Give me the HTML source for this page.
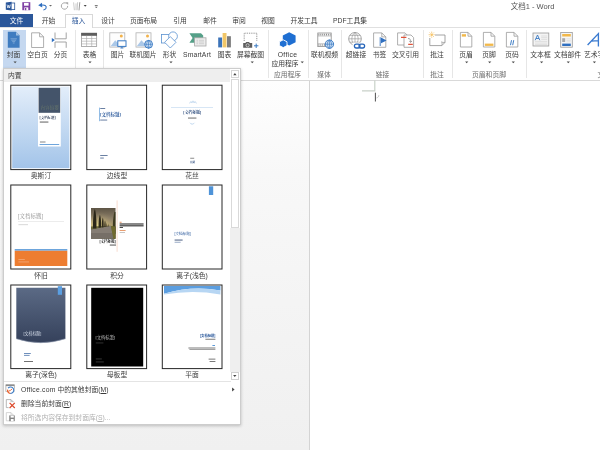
<!DOCTYPE html>
<html lang="zh-CN"><head><meta charset="utf-8"><title>文档1 - Word</title>
<style>
html,body{margin:0;padding:0;}
body{width:600px;height:450px;overflow:hidden;background:#fff;position:relative;font-family:"Liberation Sans","Noto Sans CJK SC",sans-serif;font-size:6.8px;color:#3a3a3a;line-height:9px;}
#app{position:absolute;left:0;top:0;width:600px;height:450px;overflow:hidden;will-change:transform;filter:blur(.35px);}
.a{position:absolute;}
.t{position:absolute;white-space:nowrap;transform:translateX(-50%);text-align:center;}
.l{position:absolute;white-space:nowrap;}
.sep{position:absolute;top:30px;height:48px;width:1px;background:#e6e6e6;}
.arr{position:absolute;width:0;height:0;border-left:1.5px solid transparent;border-right:1.5px solid transparent;border-top:1.9px solid #555;}
.thumb{position:absolute;width:60px;height:84px;border:1px solid #222;background:#fff;overflow:hidden;box-sizing:content-box;}
.gl{color:#6c6c6c;}
</style></head><body><div id="app">

<!-- workspace background -->
<div class="a" id="ws" style="left:0;top:81px;width:309px;height:369px;background:linear-gradient(#fefefe,#f8f8f8 25%,#f4f4f4 60%,#f0f0f0);"></div>
<div class="a" style="left:309px;top:81px;width:1px;height:369px;background:#d4d4d4;"></div>
<div class="a" style="left:0;top:80px;width:600px;height:1px;background:#d9d9d9;"></div>

<!-- title bar -->
<div class="t" style="left:532.5px;top:2px;font-size:7.5px;color:#555;">文档1 - Word</div>

<!-- tabs -->
<div class="a" style="left:0;top:14.1px;width:33px;height:13.2px;background:#2b579a;"></div>
<div class="t" style="left:16.5px;top:16.1px;color:#fff;">文件</div>
<div class="t" style="left:48.5px;top:16.1px;">开始</div>
<div class="a" style="left:64.5px;top:14px;width:28.5px;height:13.6px;border:1px solid #d8d8d8;border-bottom:none;background:#fff;box-sizing:border-box;"></div>
<div class="t" style="left:78.5px;top:16.1px;color:#2b579a;">插入</div>
<div class="t" style="left:108px;top:16.1px;">设计</div>
<div class="t" style="left:143.5px;top:16.1px;">页面布局</div>
<div class="t" style="left:180px;top:16.1px;">引用</div>
<div class="t" style="left:210px;top:16.1px;">邮件</div>
<div class="t" style="left:239px;top:16.1px;">审阅</div>
<div class="t" style="left:268px;top:16.1px;">视图</div>
<div class="t" style="left:304px;top:16.1px;">开发工具</div>
<div class="t" style="left:350px;top:16.1px;">PDF工具集</div>
<div class="a" style="left:0;top:27px;width:64.5px;height:1px;background:#e0e0e0;"></div>
<div class="a" style="left:93px;top:27px;width:507px;height:1px;background:#e0e0e0;"></div>

<!-- ribbon -->
<div class="a" style="left:2.6px;top:29.8px;width:23px;height:39px;background:#c5d8f0;"></div>
<div class="t" style="left:13.5px;top:50px;">封面</div>
<div class="t" style="left:37.5px;top:50px;">空白页</div>
<div class="t" style="left:60.5px;top:50px;">分页</div>
<div class="sep" style="left:75px;"></div>
<div class="t" style="left:89.5px;top:50px;">表格</div>
<div class="sep" style="left:103px;"></div>
<div class="t" style="left:117.5px;top:50px;">图片</div>
<div class="t" style="left:143px;top:50px;">联机图片</div>
<div class="t" style="left:169.5px;top:50px;">形状</div>
<div class="t" style="left:197px;top:50px;"><span style="letter-spacing:.15px">SmartArt</span></div>
<div class="t" style="left:224.5px;top:50px;">图表</div>
<div class="t" style="left:250.5px;top:50px;">屏幕截图</div>
<div class="sep" style="left:268px;"></div>
<div class="t" style="left:287.5px;top:50px;"><span style="letter-spacing:.3px">Office</span></div>
<div class="t" style="left:285px;top:58.5px;">应用程序</div>
<div class="t gl" style="left:287.5px;top:70px;">应用程序</div>
<div class="sep" style="left:308px;"></div>
<div class="t" style="left:324.5px;top:50px;">联机视频</div>
<div class="t gl" style="left:324px;top:70px;">媒体</div>
<div class="sep" style="left:341px;"></div>
<div class="t" style="left:356px;top:50px;">超链接</div>
<div class="t" style="left:379.5px;top:50px;">书签</div>
<div class="t" style="left:405.5px;top:50px;">交叉引用</div>
<div class="t gl" style="left:382.5px;top:70px;">链接</div>
<div class="sep" style="left:423px;"></div>
<div class="t" style="left:437px;top:50px;">批注</div>
<div class="t gl" style="left:437px;top:70px;">批注</div>
<div class="sep" style="left:452px;"></div>
<div class="t" style="left:466px;top:50px;">页眉</div>
<div class="t" style="left:489px;top:50px;">页脚</div>
<div class="t" style="left:512px;top:50px;">页码</div>
<div class="t gl" style="left:489px;top:70px;">页眉和页脚</div>
<div class="sep" style="left:526px;"></div>
<div class="t" style="left:540.5px;top:50px;">文本框</div>
<div class="t" style="left:567.5px;top:50px;">文档部件</div>
<div class="l" style="left:584px;top:50px;">艺术字</div>

<div class="l gl" style="left:597.4px;top:70px;">文本</div>
<!-- gallery panel -->
<div class="a" id="gal" style="left:2.6px;top:67.8px;width:238.2px;height:357px;background:#fff;border:1px solid #cdcdcd;box-sizing:border-box;box-shadow:0 1px 3px rgba(0,0,0,.22);"></div>
<div class="a" style="left:3.6px;top:68.8px;width:226px;height:13.6px;background:#eeeeee;"></div>
<div class="l" style="left:8px;top:70.8px;">内置</div>
<!-- scrollbar -->
<div class="a" style="left:229.5px;top:228px;width:10.5px;height:144px;background:#efefef;"></div>
<div class="a" style="left:230.6px;top:70px;width:8.4px;height:8.4px;background:#fff;border:1px solid #d6d6d6;box-sizing:border-box;"></div>
<div class="a" style="left:230.6px;top:78.6px;width:8.4px;height:149.8px;background:#fff;border:1px solid #d9d9d9;box-sizing:border-box;"></div>
<div class="a" style="left:230.6px;top:371.8px;width:8.4px;height:8.2px;background:#fff;border:1px solid #d0d0d0;box-sizing:border-box;"></div>

<div class="t" style="left:41px;top:170.6px;">奥斯汀</div>
<div class="t" style="left:117px;top:170.6px;">边线型</div>
<div class="t" style="left:192px;top:170.6px;">花丝</div>
<div class="t" style="left:41px;top:270.5px;">怀旧</div>
<div class="t" style="left:117px;top:270.5px;">积分</div>
<div class="t" style="left:192px;top:270.5px;">离子(浅色)</div>
<div class="t" style="left:41px;top:369.9px;">离子(深色)</div>
<div class="t" style="left:117px;top:369.9px;">母板型</div>
<div class="t" style="left:192px;top:369.9px;">平面</div>

<div class="a" style="left:4px;top:381px;width:227px;height:1px;background:#e4e4e4;"></div>
<div class="l" style="left:21px;top:385px;"><span style="letter-spacing:.22px">Office.com</span> 中的其他封面(<u>M</u>)</div>
<div class="l" style="left:21px;top:399px;">删除当前封面(<u>R</u>)</div>
<div class="l" style="left:21px;top:412.5px;color:#b0b0b0;">将所选内容保存到封面库(<u>S</u>)...</div>

<svg class="a" style="left:0;top:0;" width="600" height="450" viewBox="0 0 600 450">
<defs>
<linearGradient id="g1" x1="0" y1="0" x2="0" y2="1"><stop offset="0" stop-color="#e3eefa"/><stop offset="1" stop-color="#a3c4e9"/></linearGradient>
<linearGradient id="g7" x1="0" y1="0" x2="0" y2="1"><stop offset="0" stop-color="#5b6a85"/><stop offset="1" stop-color="#35415b"/></linearGradient>
<linearGradient id="gph" x1="0" y1="0" x2="0" y2="1"><stop offset="0" stop-color="#8a7a58"/><stop offset=".45" stop-color="#c9b27c"/><stop offset=".6" stop-color="#7a6a48"/><stop offset="1" stop-color="#77726c"/></linearGradient>
<linearGradient id="gsky" x1="0" y1="0" x2="0" y2="1"><stop offset="0" stop-color="#5e5546"/><stop offset=".35" stop-color="#8d7f68"/><stop offset=".6" stop-color="#b5a273"/><stop offset="1" stop-color="#77726c"/></linearGradient>
<radialGradient id="gglow" cx=".3" cy=".95" r=".75"><stop offset="0" stop-color="#e6d88a" stop-opacity=".95"/><stop offset=".5" stop-color="#cdbb7c" stop-opacity=".5"/><stop offset="1" stop-color="#8d7f68" stop-opacity="0"/></radialGradient>
</defs>
<!-- QAT -->
<g id="qat">
<rect x="9.5" y="3" width="5.2" height="6.6" fill="#fff" stroke="#2b579a" stroke-width=".8"/>
<path d="M5.8 2.6 L11.6 1.8 V10.6 L5.8 9.8Z" fill="#2b579a"/>
<path d="M7 4.6 L7.9 8 L8.7 5.2 L9.5 8 L10.4 4.6" fill="none" stroke="#fff" stroke-width=".7"/>
<rect x="22.3" y="2.2" width="8" height="8" fill="#8040a4"/>
<rect x="24" y="2.9" width="4.6" height="2.8" fill="#fff"/>
<rect x="24.3" y="7.4" width="4" height="2.8" fill="#fff"/>
<rect x="25" y="8" width="1.3" height="2.2" fill="#8040a4"/>
<path d="M41 5.2 C44.5 4.4 47 5.8 46 8.2 C45.4 9.4 44.4 9.8 43.4 10" fill="none" stroke="#2f6fc0" stroke-width="1.1"/>
<path d="M38.2 5.3 L42 2.8 L42.3 7.6Z" fill="#2f6fc0"/>
<path d="M49 4.9 h3 l-1.5 1.7z" fill="#666"/>
<path d="M66.6 3.6 A3.2 3.2 0 1 0 67.7 5.9" fill="none" stroke="#a6a6a6" stroke-width="1"/>
<path d="M65.4 2.2 h2.8 v2.8z" fill="#a6a6a6"/>
<path d="M73.6 2.4 L74.4 10.2 M76 3.4 V10.2 M77.6 2.2 L77.2 10.2" stroke="#c6c6c6" stroke-width=".9" fill="none"/>
<path d="M79.8 2.2 L79 10.4" stroke="#9c9c9c" stroke-width="1" fill="none"/>
<path d="M83.7 4.9 h3 l-1.5 1.8z" fill="#444"/>
<path d="M94.8 5 h2.9 v.7 h-2.9z M94.8 6.7 h2.9 l-1.45 1.4z" fill="#555"/>
</g>
<g id="arrows" fill="#4a4a4a"><path d="M13.50 61.5 h3.2 l-1.6 1.8z"/><path d="M88.40 61.5 h3.2 l-1.6 1.8z"/><path d="M169.40 61.5 h3.2 l-1.6 1.8z"/><path d="M250.65 61.5 h3.2 l-1.6 1.8z"/><path d="M300.65 61.5 h3.2 l-1.6 1.8z"/><path d="M465.10 61.5 h3.2 l-1.6 1.8z"/><path d="M488.10 61.5 h3.2 l-1.6 1.8z"/><path d="M511.70 61.5 h3.2 l-1.6 1.8z"/><path d="M540.00 61.5 h3.2 l-1.6 1.8z"/><path d="M566.70 61.5 h3.2 l-1.6 1.8z"/><path d="M592.80 61.5 h3.2 l-1.6 1.8z"/></g>
<!-- ribbon icons -->
<g id="rib" fill="none">
<!-- cover -->
<path d="M7.8 31.8 H16 L19.6 35.4 V47.8 H7.8Z" fill="#3f7cc0"/>
<path d="M16 31.8 V35.4 H19.6Z" fill="#9dbde0"/>
<path d="M10.5 38.8 h6.4 M11.3 40.2 h4.8 M12.2 41.6 h3 M12.8 43 h1.8" stroke="#8fb4de" stroke-width=".7"/>
<!-- blank page -->
<path d="M31.6 32.8 H39.6 L43.6 36.8 V47.5 H31.6Z" fill="#fff" stroke="#9a9a9a" stroke-width=".8"/>
<path d="M39.6 32.8 V36.8 H43.6" stroke="#9a9a9a" stroke-width=".8"/>
<!-- page break -->
<path d="M55 32.5 V38.8 H66.2 V32.5 M55 47.8 V42 H66.2 V47.8" stroke="#9a9a9a" stroke-width=".9"/>
<path d="M51.8 38 L54.9 40.1 L51.8 42.2Z" fill="#2f6fc0"/>
<!-- table -->
<rect x="81.5" y="33.2" width="15.2" height="13.4" fill="#fff" stroke="#8e8e8e" stroke-width=".7"/>
<rect x="81.2" y="32.9" width="15.8" height="2.9" fill="#5e5e5e"/>
<path d="M81.5 38.5 h15.2 M81.5 41.2 h15.2 M81.5 43.9 h15.2 M86.6 35.8 v10.8 M91.7 35.8 v10.8" stroke="#a6a6a6" stroke-width=".6"/>
<!-- picture -->
<rect x="109.8" y="32.8" width="15" height="14.3" fill="#fdfdfd" stroke="#b2b2b2" stroke-width=".8"/>
<path d="M110.6 46.3 L115.2 40.3 L118 43.2 L119.4 41.8 L123 46.3Z" fill="#abc8e8"/>
<circle cx="121.3" cy="36" r="1.5" fill="#f2b24a"/>
<rect x="117.8" y="40.8" width="8.2" height="5.6" fill="#fff" stroke="#3b7bc4" stroke-width="1"/>
<path d="M120.4 48 h3 M121.9 46.6 v1.4" stroke="#3b7bc4" stroke-width=".9"/>
<!-- online picture -->
<rect x="136" y="32.8" width="15" height="14.3" fill="#fdfdfd" stroke="#b2b2b2" stroke-width=".8"/>
<path d="M136.8 46.3 L141.4 40.3 L144.2 43.2 L145.6 41.8 L149.2 46.3Z" fill="#abc8e8"/>
<circle cx="147.5" cy="36" r="1.5" fill="#f2b24a"/>
<circle cx="148.6" cy="44.3" r="3.9" fill="#dce9f7" stroke="#3b7bc4" stroke-width="1"/>
<path d="M144.7 44.3 h7.8 M148.6 40.4 v7.8 M148.6 40.4 C146 42.5 146 46.2 148.6 48.2 M148.6 40.4 C151.2 42.5 151.2 46.2 148.6 48.2" stroke="#3b7bc4" stroke-width=".7"/>
<!-- shapes -->
<rect x="161.5" y="34.4" width="9.6" height="8.6" fill="#fff" stroke="#5a92d0" stroke-width=".8"/>
<circle cx="173" cy="36.3" r="4.4" fill="#fff" stroke="#5a92d0" stroke-width=".8"/>
<path d="M170.3 36.6 L176 42.3 L170.3 48 L164.6 42.3Z" fill="#fff" stroke="#5a92d0" stroke-width=".8"/>
<!-- smartart -->
<path d="M189.4 33.3 H201 L203.2 35.6 V40.3 L201 42.7 H189.4 L192.6 38Z" fill="#55a088"/>
<rect x="194.6" y="37.8" width="11.4" height="8.2" fill="#ececec" stroke="#a8a8a8" stroke-width=".8"/>
<path d="M196.5 40.3 h1.6 M199 40.3 h5 M196.5 42 h1.6 M199 42 h5 M196.5 43.7 h1.6 M199 43.7 h5" stroke="#c4c4c4" stroke-width=".7"/>
<!-- chart -->
<rect x="218.2" y="37.5" width="3.9" height="9.9" fill="#3b73b9"/>
<rect x="222.6" y="33" width="3.9" height="14.4" fill="#f1c667"/>
<rect x="227" y="36.2" width="3.9" height="11.2" fill="#7d7d7d"/>
<!-- screenshot -->
<path d="M244.2 41 V33.2 H256.8 V41.5" stroke="#555" stroke-width=".7" stroke-dasharray=".9 .9"/>
<path d="M243.2 43 H245.4 L246.2 41.9 H249 L249.8 43 H252.2 V47.8 H243.2Z" fill="#5e5e5e"/>
<circle cx="247.6" cy="45.3" r="1.6" fill="#5e5e5e" stroke="#e8e8e8" stroke-width=".7"/>
<path d="M254 45.8 h4.4 M256.2 43.6 v4.4" stroke="#3b7bc4" stroke-width="1"/>
<!-- office apps -->
<path d="M289.2 32.3 L295.6 35.6 V42.2 L289.2 45.6 L282.8 42.2 V35.6Z" fill="#1f6fd2"/>
<path d="M283.2 39.8 L287 41.8 V45.6 L283.2 47.6 L279.4 45.6 V41.8Z" fill="#1f6fd2" stroke="#fff" stroke-width=".9"/>
<!-- online video -->
<rect x="317.8" y="33" width="13.4" height="13.6" fill="#fff" stroke="#8e8e8e" stroke-width=".8"/>
<path d="M318.4 34.6 h12.2 M318.4 45 h12.2" stroke="#8e8e8e" stroke-width="1.6" stroke-dasharray="1 .9"/>
<path d="M317.8 36 h13.4 M317.8 43.7 h13.4" stroke="#8e8e8e" stroke-width=".5"/>
<circle cx="329.4" cy="44.2" r="4.2" fill="#cfe0f4" stroke="#3b7bc4" stroke-width="1"/>
<path d="M325.2 44.2 h8.4 M329.4 40 v8.4 M329.4 40 C326.6 42.2 326.6 46.2 329.4 48.4 M329.4 40 C332.2 42.2 332.2 46.2 329.4 48.4" stroke="#3b7bc4" stroke-width=".7"/>
<!-- hyperlink -->
<circle cx="355" cy="38.8" r="6.3" fill="#fff" stroke="#8e8e8e" stroke-width=".8"/>
<path d="M348.7 38.8 h12.6 M355 32.5 v12.6 M349.8 35.4 h10.4 M349.8 42.2 h10.4 M355 32.5 C350.8 35.5 350.8 42 355 45.1 M355 32.5 C359.2 35.5 359.2 42 355 45.1" stroke="#8e8e8e" stroke-width=".6"/>
<rect x="352.6" y="42.6" width="14" height="6.6" fill="#fff" stroke="none"/>
<rect x="354.4" y="44.2" width="5.6" height="3.8" rx="1.9" stroke="#2463b8" stroke-width="1.3"/>
<rect x="359" y="44.2" width="5.6" height="3.8" rx="1.9" stroke="#2463b8" stroke-width="1.3"/>
<!-- bookmark -->
<path d="M373.6 32.9 H381.8 L385.8 36.9 V47.3 H373.6Z" fill="#fff" stroke="#9a9a9a" stroke-width=".8"/>
<path d="M381.8 32.9 V36.9 H385.8" stroke="#9a9a9a" stroke-width=".8"/>
<path d="M380.2 37.2 V46" stroke="#2f6fc0" stroke-width=".9"/>
<path d="M381 37.6 L386.6 40.4 L381 43.2Z" fill="#2f6fc0"/>
<!-- cross reference -->
<path d="M397.6 32.9 H405 L407.6 35.5 V45 H397.6Z" fill="#fff" stroke="#9a9a9a" stroke-width=".8"/>
<path d="M404 35 H411 L413.6 37.6 V47.3 H404Z" fill="#fff" stroke="#9a9a9a" stroke-width=".8"/>
<path d="M401 37.4 h5.4 M408.2 44.3 h4.6" stroke="#e0533a" stroke-width="1.3"/>
<path d="M408 38.5 C410.3 38.6 410.8 39.8 410.6 42 M409.2 41 L410.6 42.4 L412 41" stroke="#777" stroke-width=".7"/>
<!-- comment -->
<path d="M429.8 35 H445 V42.4 L441.8 45.6 H429.8Z" fill="#fff" stroke="#8e8e8e" stroke-width=".8"/>
<path d="M445 42.4 C443.6 42.6 442.2 42.4 441.6 41.8 C442.2 43 442.2 44.6 441.8 45.6" stroke="#8e8e8e" stroke-width=".7"/>
<rect x="428.4" y="31.4" width="6.6" height="6.6" fill="#fff" stroke="none"/>
<circle cx="431.7" cy="34.7" r="1.3" fill="#f7c56a"/>
<path d="M431.7 31.6 v1.4 M431.7 36.4 v1.4 M428.6 34.7 h1.4 M433.4 34.7 h1.4 M429.5 32.5 l1 1 M432.9 35.9 l1 1 M429.5 36.9 l1 -1 M432.9 33.5 l1 -1" stroke="#f0b040" stroke-width=".6"/>
<!-- header / footer / page number -->
<path d="M460.4 32.4 H468 L471.8 36.2 V47 H460.4Z" fill="#fff" stroke="#9a9a9a" stroke-width=".8"/>
<path d="M468 32.4 V36.2 H471.8" stroke="#9a9a9a" stroke-width=".8"/>
<rect x="461.8" y="34.2" width="4.2" height="2.4" fill="#f2b84a"/>
<path d="M483.4 32.4 H491 L494.8 36.2 V47 H483.4Z" fill="#fff" stroke="#9a9a9a" stroke-width=".8"/>
<path d="M491 32.4 V36.2 H494.8" stroke="#9a9a9a" stroke-width=".8"/>
<rect x="484.8" y="43.6" width="8.6" height="2.3" fill="#f2b84a"/>
<path d="M506.4 32.4 H514 L517.8 36.2 V47 H506.4Z" fill="#fff" stroke="#9a9a9a" stroke-width=".8"/>
<path d="M514 32.4 V36.2 H517.8" stroke="#9a9a9a" stroke-width=".8"/>
<path d="M511.5 40.2 L510.5 45.2 M513.7 40.2 L512.7 45.2" stroke="#3b7bc4" stroke-width="1"/>
<!-- text box -->
<rect x="533" y="33" width="15.8" height="13" fill="#f4f4f4" stroke="#9a9a9a" stroke-width=".8"/>
<path d="M541.2 36 h6 M541.2 37.7 h6 M541.2 39.4 h6 M535 41.4 h12.2 M535 43.1 h12.2 M535 44.6 h12.2" stroke="#d0d0d0" stroke-width=".6"/>
<path d="M535.2 40.2 L537.5 35 L539.8 40.2 M536 38.5 h3" stroke="#3b7bc4" stroke-width=".9"/>
<!-- quick parts -->
<rect x="560.7" y="32.4" width="11.6" height="14.8" fill="#f6f6f6" stroke="#9a9a9a" stroke-width=".8"/>
<rect x="562.2" y="34" width="8.6" height="2.5" fill="#f2b84a"/>
<rect x="562.2" y="38.2" width="3" height="3.8" fill="#a8a8a8"/>
<path d="M566.4 38.8 h4.4 M566.4 40.4 h4.4 M566.4 41.8 h4.4" stroke="#d0d0d0" stroke-width=".6"/>
<rect x="562.2" y="43.6" width="8.6" height="2.4" fill="#2f6fc0"/>
<!-- wordart A -->
<path d="M587.6 45 L598.4 33.6 L598.4 46.6 M591.2 41.2 L598.6 40.6" stroke="#3a7ad0" stroke-width="1.35"/>
</g>
<!-- thumbnails -->
<g id="thumbs" font-family="'Liberation Serif','Noto Serif CJK SC',serif" font-weight="bold">
<g fill="#fff" stroke="#262626" stroke-width="1">
<rect x="10.8" y="85.2" width="60" height="84.4"/><rect x="86.8" y="85.2" width="59.8" height="84.4"/><rect x="162.3" y="85.2" width="59.7" height="84.4"/>
<rect x="10.8" y="185" width="60" height="84"/><rect x="86.8" y="185" width="59.8" height="84"/><rect x="162.3" y="185" width="59.7" height="84"/>
<rect x="10.8" y="285" width="60" height="83.6"/><rect x="86.8" y="285" width="59.8" height="83.6"/><rect x="162.3" y="285" width="59.7" height="83.6"/>
</g>
<!-- 1 austin -->
<rect x="12.2" y="86.6" width="57.2" height="81.6" fill="url(#g1)"/>
<rect x="38" y="87.3" width="22.8" height="59.2" fill="#fff"/>
<rect x="38.6" y="87.8" width="21.6" height="25" fill="#44546a"/>
<text x="40.4" y="108.7" font-size="4.4" font-weight="normal" fill="#7f8d6c" opacity=".6" textLength="18.5" lengthAdjust="spacingAndGlyphs">内容摘要</text>
<text x="39.6" y="118.6" font-size="3.8" fill="#1c2c4a" textLength="16" lengthAdjust="spacingAndGlyphs">[文档标题]</text>
<rect x="39.8" y="121.6" width="8.6" height=".9" fill="#222" opacity=".8"/>
<rect x="40" y="141.6" width="5.5" height=".8" fill="#444" opacity=".8"/>
<rect x="39.6" y="144.2" width="19.6" height=".8" fill="#4a8fd4"/>
<!-- 2 sideline -->
<rect x="99.2" y="107.6" width=".6" height="13.6" fill="#4a8fd4"/>
<rect x="100.2" y="108" width="5" height=".9" fill="#2f4f7f" opacity=".8"/>
<text x="100" y="116.3" font-size="4.2" fill="#2c5a9c" textLength="21" lengthAdjust="spacingAndGlyphs">[文档标题]</text>
<rect x="100.2" y="119.6" width="7" height=".9" fill="#2f4f7f" opacity=".8"/>
<rect x="100.2" y="155" width="7.4" height=".9" fill="#2f4f7f" opacity=".8"/>
<rect x="100.2" y="157.6" width="3.6" height=".9" fill="#2f4f7f" opacity=".8"/>
<!-- 3 filigree -->
<path d="M189.6 103.4 C190.2 101.4 191.4 101.2 192 102.8 C192.4 100.2 193.6 100.2 194 102.8 C194.6 101.2 195.8 101.4 196.4 103.4" fill="none" stroke="#a9c8e8" stroke-width=".7"/>
<rect x="171" y="107" width="42" height=".6" fill="#bdd6ef"/>
<text x="192.2" y="114" font-size="4" fill="#2a4a7c" text-anchor="middle" textLength="18" lengthAdjust="spacingAndGlyphs">[文档标题]</text>
<rect x="188" y="117.6" width="8.4" height=".9" fill="#333" opacity=".8"/>
<path d="M190 122.8 C191 124.6 193.4 124.6 194.4 122.8" fill="none" stroke="#a9c8e8" stroke-width=".7"/>
<rect x="190.2" y="157.8" width="4" height=".8" fill="#333" opacity=".7"/>
<text x="192.2" y="163" font-size="2.8" fill="#2a4a7c" text-anchor="middle">日期</text>
<!-- 4 retrospect -->
<text x="17.8" y="218.4" font-size="6" font-weight="normal" fill="#909090" textLength="25.4" lengthAdjust="spacingAndGlyphs">[文档标题]</text>
<rect x="18" y="221" width="46" height=".5" fill="#d8d8d8"/>
<rect x="18.4" y="224.4" width="9.6" height=".7" fill="#888" opacity=".45"/>
<rect x="14.7" y="249.2" width="52.6" height="1.4" fill="#4a8fd4"/>
<rect x="14.7" y="250.8" width="52.6" height="15.2" fill="#ed7d31"/>
<rect x="18.4" y="259.2" width="6.4" height=".7" fill="#fff" opacity=".4"/>
<rect x="18.4" y="261.6" width="10.6" height=".7" fill="#fff" opacity=".4"/>
<!-- 5 integral -->
<g id="photo">
<rect x="91" y="208" width="24.5" height="30.7" fill="url(#gsky)"/>
<rect x="91" y="208" width="24.5" height="19" fill="url(#gglow)"/>
<path d="M91 226.4 L110 225.8 L115.5 226.6 V238.7 H91Z" fill="#6d6a3a"/>
<path d="M91 229.6 L109.6 226 L111 226 L113.4 238.7 H91Z" fill="#857d74"/>
<path d="M91 233 L113 233 L113.4 238.7 H91Z" fill="#6f6962" opacity=".7"/>
<path d="M93 228.6 C92.8 220 93.6 212 94.8 209 C96 212 96.6 220 96.4 228.4Z" fill="#2a2619"/>
<path d="M98.6 227.8 C98.4 222 99 217 99.9 214.8 C100.9 217 101.3 222 101.1 227.6Z" fill="#2d291b"/>
<path d="M101.8 227.4 C101.7 223 102.1 219.4 102.8 217.6 C103.5 219.4 103.8 223 103.7 227.2Z" fill="#322d1e"/>
<path d="M104.2 227 C104.2 224 104.5 221.6 105 220.4 C105.5 221.6 105.8 224 105.7 226.9Z" fill="#3a3423"/>
<path d="M106.2 226.7 L106.7 222.4 L107.3 226.6Z M107.8 226.5 L108.2 223.6 L108.7 226.4Z" fill="#453d2a"/>
<path d="M113 233 C112.4 224 113.4 215 114.6 211.6 L115.5 212.4 V234Z" fill="#3d3a20"/>
<path d="M111 226 L115.5 226.6 V238.7 H113.4Z" fill="#6f6a2e"/>
</g>
<rect x="116.8" y="200.4" width=".5" height="51.4" fill="#f0b9a0"/>
<rect x="119.6" y="221.8" width="2" height=".8" fill="#e0783a"/>
<rect x="119.6" y="223.4" width="24" height="1.2" fill="#1a1a1a" opacity=".85"/>
<rect x="119.6" y="225.2" width="24" height="1.2" fill="#1a1a1a" opacity=".85"/>
<rect x="119.6" y="227" width="3.4" height="1" fill="#1a1a1a" opacity=".8"/>
<rect x="119.6" y="230.2" width="6" height=".8" fill="#e0783a" opacity=".9"/>
<rect x="119.6" y="232.2" width="5.4" height=".7" fill="#777" opacity=".6"/>
<text x="115.8" y="243.2" font-size="4" fill="#111" text-anchor="end" textLength="16.4" lengthAdjust="spacingAndGlyphs">[文档标题]</text>
<rect x="109.8" y="244.6" width="6.2" height=".9" fill="#222" opacity=".85"/>
<!-- 6 ion light -->
<rect x="208.9" y="186.3" width="4.3" height="8.7" fill="#4e93d8"/>
<text x="174.4" y="235.1" font-size="3.8" font-weight="normal" fill="#2c5a9c" textLength="16.4" lengthAdjust="spacingAndGlyphs" font-family="'Liberation Sans','Noto Sans CJK SC',sans-serif">[文档标题]</text>
<rect x="174.6" y="239.6" width="8" height=".9" fill="#1f3864" opacity=".9"/>
<rect x="174.6" y="241.8" width="6" height=".8" fill="#4a6a9a" opacity=".7"/>
<!-- 7 ion dark -->
<path d="M16.3 287.8 H65.4 V338.8 Q40.8 346.6 16.3 338.8Z" fill="url(#g7)"/>
<path d="M16.3 338.8 Q40.8 346.6 65.4 338.8" fill="none" stroke="#8f9bb0" stroke-width=".6"/>
<rect x="57.8" y="286.2" width="4.2" height="8.6" fill="#5a9fe2"/>
<text x="23.5" y="334.8" font-size="4.2" font-weight="normal" fill="#d3dbe8" textLength="17.8" lengthAdjust="spacingAndGlyphs" font-family="'Liberation Sans','Noto Sans CJK SC',sans-serif">[文档标题]</text>
<rect x="24" y="353" width="6.8" height=".8" fill="#2c5a9c" opacity=".85"/>
<rect x="24" y="354.9" width="5.6" height=".8" fill="#2c5a9c" opacity=".85"/>
<rect x="24" y="361" width="9" height=".8" fill="#222" opacity=".8"/>
<!-- 8 motion -->
<rect x="91.2" y="287.8" width="52" height="78.7" fill="#000"/>
<text x="95.4" y="339.4" font-size="4.6" font-weight="normal" fill="#d8d8d8" textLength="19.8" lengthAdjust="spacingAndGlyphs">[文档标题]</text>
<rect x="95.8" y="342.6" width="7.6" height=".7" fill="#999" opacity=".45"/>
<rect x="95.8" y="358.6" width="6" height=".7" fill="#aaa" opacity=".45"/>
<rect x="95.8" y="361.6" width="8" height=".7" fill="#aaa" opacity=".45"/>
<!-- 9 facet -->
<path d="M164 286 H220.4 V290.6 Q192 285.4 164 293.8Z" fill="#5b9ee0"/>
<path d="M164 293.8 Q192 285.4 220.4 290.6 V294.4 Q192 289.6 164 294.6Z" fill="#b7d6f3"/>
<text x="215.4" y="337" font-size="3.8" fill="#2c5a9c" text-anchor="end" textLength="15.4" lengthAdjust="spacingAndGlyphs" font-family="'Liberation Sans','Noto Sans CJK SC',sans-serif">[文档标题]</text>
<rect x="205.4" y="338.8" width="10" height=".8" fill="#222" opacity=".75"/>
<rect x="212.4" y="345" width="2.6" height=".9" fill="#4a8fd4"/>
<rect x="188.4" y="347.6" width="27" height=".8" fill="#222" opacity=".75"/>
<rect x="189.4" y="349.3" width="26" height=".7" fill="#222" opacity=".6"/>
<rect x="208.6" y="358.7" width="6.8" height=".8" fill="#222" opacity=".75"/>
<rect x="209.6" y="361.1" width="5.8" height=".8" fill="#222" opacity=".75"/>
</g>
<path d="M233.2 75.2 h3.4 l-1.7 -2.1z M233.1 375 h3.4 l-1.7 2.1z M232.1 387.4 v4 l2.5 -2z" fill="#444"/>
<!-- menu icons -->
<g fill="none">
<rect x="5.9" y="384.8" width="8.4" height="6.6" fill="#fff" stroke="#9a9a9a" stroke-width=".7"/>
<rect x="5.9" y="384.6" width="8.4" height="1.5" fill="#8c8c8c"/>
<circle cx="10.6" cy="390.2" r="3.9" fill="#fff"/>
<path d="M8.1 388.2 A3.2 3.2 0 1 1 10.2 393.4" stroke="#3b7bc4" stroke-width="1.1"/>
<path d="M10.2 393.4 A3.2 3.2 0 0 1 7.5 389.6" stroke="#e8602c" stroke-width="1.1"/>
<path d="M7.4 391.6 L10.4 390.4 L12 389" stroke="#e8602c" stroke-width=".9"/>
<path d="M6.3 399.6 H11 L13.4 402 V407.6 H6.3Z" fill="#fff" stroke="#9a9a9a" stroke-width=".7"/>
<path d="M11 399.6 V402 H13.4" stroke="#9a9a9a" stroke-width=".6"/>
<rect x="8.6" y="402.2" width="6.8" height="6" fill="#fff"/>
<path d="M9.6 402.8 L14.8 408 M14.8 402.8 L9.6 408" stroke="#dc4a2c" stroke-width="1.2"/>
<path d="M6.3 412.6 H11 L13.4 415 V420.8 H6.3Z" fill="#fff" stroke="#c4c4c4" stroke-width=".7"/>
<path d="M11 412.6 V415 H13.4" stroke="#c4c4c4" stroke-width=".6"/>
<rect x="9.2" y="415.4" width="5.6" height="5.8" fill="#858585"/>
<rect x="10.6" y="415.6" width="3.2" height="2" fill="#fff"/>
<rect x="10.8" y="419" width="2.8" height="2.2" fill="#fff"/>
</g>
<!-- document cursor -->
<path d="M374.8 80.6 V90.8 H362" fill="none" stroke="#c9d1c9" stroke-width="1.2"/>
<rect x="374.9" y="92.7" width=".9" height="8.8" fill="#3c3c3c"/>
<path d="M376.4 98 C378 97.6 378.8 96.6 378.8 95.2" fill="none" stroke="#aaa" stroke-width=".6"/>
</svg>
</div></body></html>
